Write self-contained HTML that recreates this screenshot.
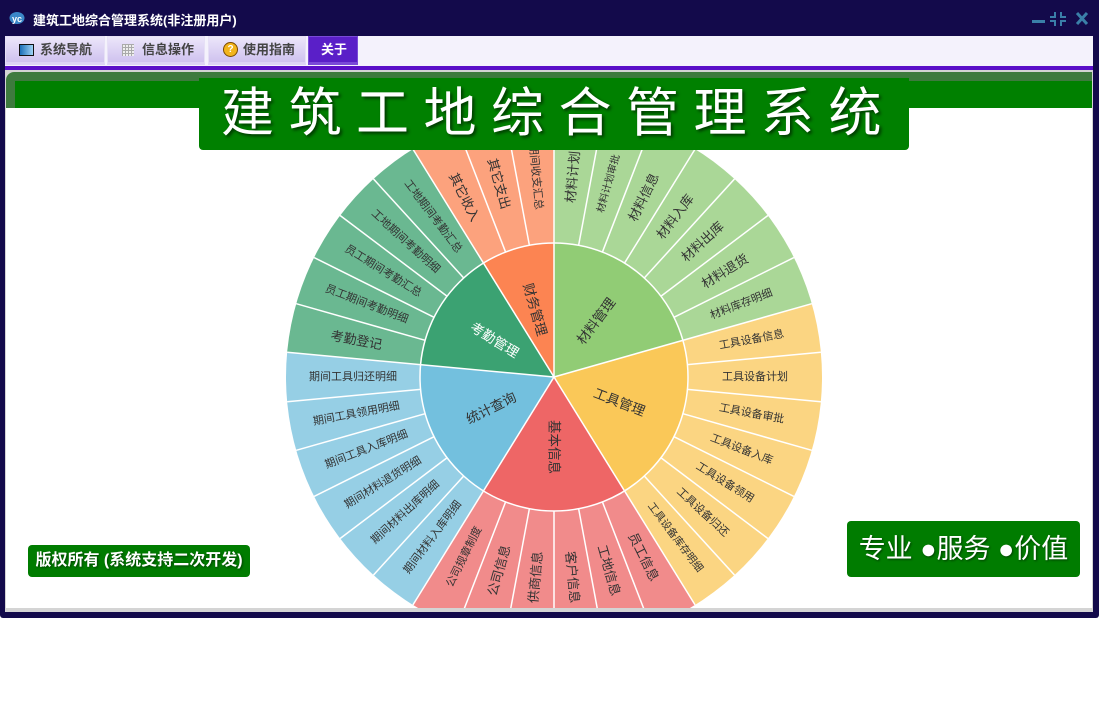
<!DOCTYPE html>
<html><head><meta charset="utf-8">
<style>
*{margin:0;padding:0;box-sizing:border-box}
body{width:1099px;height:723px;background:#fff;position:relative;overflow:hidden;font-family:"Liberation Sans","Noto Sans CJK SC",sans-serif}
.win{position:absolute;left:0;top:0;width:1099px;height:618px;background:#130a4b;border-radius:0 0 3px 3px}
.title{position:absolute;left:33px;top:10px;color:#fff;font-weight:bold;font-size:13px}
.tabbar{position:absolute;left:5px;top:36px;width:1088px;height:30px;background:#f4f2fc}
.tab{position:absolute;top:0;height:29px;background:linear-gradient(#ece6fa,#cfc2ef);border:1px solid #e6e0f6;border-bottom:3px solid #ddd3f5;font-size:13px;font-weight:bold;color:#444;line-height:26px}
.tab.act{background:#5a1fc8;color:#fff;border-color:#7a4ad8}
.pline{position:absolute;left:5px;top:66px;width:1088px;height:4px;background:#5a0fc8}
.content{position:absolute;left:5px;top:70px;width:1088px;height:542px;background:#d4d4d4}
.inner{position:absolute;left:6px;top:72px;width:1086px;height:536px;background:#fff;overflow:hidden;border-radius:8px 0 0 0}
.gtop{position:absolute;left:0;top:0;width:1086px;height:36px;background:#3e7a3e}
.gbar{position:absolute;left:9px;top:9px;width:1077px;height:27px;background:#008000}
.chart{position:absolute;left:0;top:36px;width:1086px;height:500px;overflow:hidden}
.disc{position:absolute;border-radius:50%}
.banner{position:absolute;left:199px;top:78px;width:710px;height:72px;background:#008000;border-radius:0 0 4px 4px;color:#fff;font-family:"Liberation Sans","Noto Sans CJK SC",sans-serif;font-size:53px;letter-spacing:14.5px;line-height:72px;text-indent:22px;text-shadow:2px 2px 3px rgba(0,0,0,.6);white-space:nowrap}
.b1{position:absolute;left:28px;top:545px;width:222px;height:32px;background:#007c00;border-radius:4px;color:#fff;font-weight:bold;font-size:16px;line-height:32px;text-align:center;white-space:nowrap;text-shadow:1px 1px 2px rgba(0,0,0,.5)}
.b2{position:absolute;left:847px;top:521px;width:233px;height:56px;background:#007c00;border-radius:4px;color:#fff;font-size:27px;line-height:56px;text-align:center;white-space:nowrap;text-shadow:1px 1px 2px rgba(0,0,0,.5)}
</style></head><body>
<div class="win"></div>
<svg style="position:absolute;left:9px;top:10px" width="16" height="15"><ellipse cx="8" cy="8" rx="7.5" ry="6" fill="#3b87c8"/><text x="3" y="12" font-size="9" font-weight="bold" fill="#fff" font-family="Liberation Sans">yc</text></svg>
<div class="title">建筑工地综合管理系统(非注册用户)</div>
<svg style="position:absolute;left:1030px;top:11px" width="62" height="16">
<rect x="2" y="9" width="13" height="3" fill="#3a7fa8"/>
<g fill="#3a7fa8"><rect x="24" y="1" width="2" height="5"/><rect x="20" y="5" width="6" height="2"/><rect x="30" y="1" width="2" height="5"/><rect x="30" y="5" width="6" height="2"/><rect x="24" y="9" width="2" height="6"/><rect x="20" y="9" width="6" height="2"/><rect x="30" y="9" width="2" height="6"/><rect x="30" y="9" width="6" height="2"/></g>
<path d="M47 2 L57 13 M57 2 L47 13" stroke="#3a7fa8" stroke-width="3"/>
</svg>
<div class="tabbar">
 <div class="tab" style="left:0;width:100px"><span style="position:absolute;left:13px;top:7px;width:15px;height:12px;border:1px solid #111;background:linear-gradient(90deg,#1a6fb8,#9fd3f5)"></span><span style="position:absolute;left:34px">系统导航</span></div>
 <div class="tab" style="left:102px;width:98px"><span style="position:absolute;left:14px;top:7px;width:12px;height:12px;background:repeating-linear-gradient(90deg,#aaa 0 1px,transparent 1px 3px),repeating-linear-gradient(#aaa 0 1px,#eee 1px 3px)"></span><span style="position:absolute;left:34px">信息操作</span></div>
 <div class="tab" style="left:203px;width:98px"><span style="position:absolute;left:14px;top:5px;width:15px;height:15px;border-radius:50%;background:#f2b41c;border:1px solid #7a4a00;color:#fff;font-size:10px;line-height:13px;text-align:center;font-weight:bold">?</span><span style="position:absolute;left:34px">使用指南</span></div>
 <div class="tab act" style="left:303px;width:50px"><span style="position:absolute;left:12px">关于</span></div>
</div>
<div class="pline"></div>
<div class="content"></div>
<div class="inner">
 <div class="gtop"></div><div class="gbar"></div>
 <div class="chart">
  <div class="disc" style="left:280px;top:1px;width:536px;height:536px;background:conic-gradient(#aad797 0 74.12deg,#fbd582 74.12deg 148.24deg,#f18b8b 148.24deg 211.76deg,#96cfe5 211.76deg 275.29deg,#6ab891 275.29deg 328.24deg,#fca27d 328.24deg 360deg)"></div>
  <div class="disc" style="left:414px;top:135px;width:268px;height:268px;background:conic-gradient(#91cc75 0 74.12deg,#fac858 74.12deg 148.24deg,#ee6666 148.24deg 211.76deg,#73c0de 211.76deg 275.29deg,#3ba272 275.29deg 328.24deg,#fc8452 328.24deg 360deg)"></div>
  <svg style="position:absolute;left:0;top:0" width="1086" height="500">
   <g transform="translate(548,269)" stroke="#fff" stroke-width="1.5">
    <circle r="134" fill="none"/>
    <line y1="0" y2="-268" transform="rotate(0)"/><line y1="0" y2="-268" transform="rotate(74.12)"/><line y1="0" y2="-268" transform="rotate(148.24)"/><line y1="0" y2="-268" transform="rotate(211.76)"/><line y1="0" y2="-268" transform="rotate(275.29)"/><line y1="0" y2="-268" transform="rotate(328.24)"/>
    <line y1="-134" y2="-268" transform="rotate(10.59)"/><line y1="-134" y2="-268" transform="rotate(21.18)"/><line y1="-134" y2="-268" transform="rotate(31.76)"/><line y1="-134" y2="-268" transform="rotate(42.35)"/><line y1="-134" y2="-268" transform="rotate(52.94)"/><line y1="-134" y2="-268" transform="rotate(63.53)"/>
    <line y1="-134" y2="-268" transform="rotate(84.71)"/><line y1="-134" y2="-268" transform="rotate(95.29)"/><line y1="-134" y2="-268" transform="rotate(105.88)"/><line y1="-134" y2="-268" transform="rotate(116.47)"/><line y1="-134" y2="-268" transform="rotate(127.06)"/><line y1="-134" y2="-268" transform="rotate(137.65)"/>
    <line y1="-134" y2="-268" transform="rotate(158.82)"/><line y1="-134" y2="-268" transform="rotate(169.41)"/><line y1="-134" y2="-268" transform="rotate(180)"/><line y1="-134" y2="-268" transform="rotate(190.59)"/><line y1="-134" y2="-268" transform="rotate(201.18)"/>
    <line y1="-134" y2="-268" transform="rotate(222.35)"/><line y1="-134" y2="-268" transform="rotate(232.94)"/><line y1="-134" y2="-268" transform="rotate(243.53)"/><line y1="-134" y2="-268" transform="rotate(254.12)"/><line y1="-134" y2="-268" transform="rotate(264.71)"/>
    <line y1="-134" y2="-268" transform="rotate(285.88)"/><line y1="-134" y2="-268" transform="rotate(296.47)"/><line y1="-134" y2="-268" transform="rotate(307.06)"/><line y1="-134" y2="-268" transform="rotate(317.65)"/>
    <line y1="-134" y2="-268" transform="rotate(338.82)"/><line y1="-134" y2="-268" transform="rotate(349.41)"/>
   </g>
   <g transform="translate(548,269)" fill="#333" font-family="Liberation Sans,Noto Sans CJK SC,sans-serif" text-anchor="middle" dominant-baseline="central" font-size="13">
    <g transform="rotate(-84.71) translate(201,0)"><text>材料计划</text></g>
    <g transform="rotate(-74.12) translate(201,0)" font-size="10"><text>材料计划审批</text></g>
    <g transform="rotate(-63.53) translate(201,0)"><text>材料信息</text></g>
    <g transform="rotate(-52.94) translate(201,0)"><text>材料入库</text></g>
    <g transform="rotate(-42.35) translate(201,0)"><text>材料出库</text></g>
    <g transform="rotate(-31.76) translate(201,0)"><text>材料退货</text></g>
    <g transform="rotate(-21.18) translate(201,0)" font-size="11"><text>材料库存明细</text></g>
    <g transform="rotate(-10.59) translate(201,0)" font-size="11"><text>工具设备信息</text></g>
    <g transform="rotate(0) translate(201,0)" font-size="11"><text>工具设备计划</text></g>
    <g transform="rotate(10.59) translate(201,0)" font-size="11"><text>工具设备审批</text></g>
    <g transform="rotate(21.18) translate(201,0)" font-size="11"><text>工具设备入库</text></g>
    <g transform="rotate(31.76) translate(201,0)" font-size="11"><text>工具设备领用</text></g>
    <g transform="rotate(42.35) translate(201,0)" font-size="11"><text>工具设备归还</text></g>
    <g transform="rotate(52.94) translate(201,0)" font-size="10.5"><text>工具设备库存明细</text></g>
    <g transform="rotate(63.53) translate(201,0)"><text>员工信息</text></g>
    <g transform="rotate(74.12) translate(201,0)"><text>工地信息</text></g>
    <g transform="rotate(84.71) translate(201,0)"><text>客户信息</text></g>
    <g transform="rotate(275.29) translate(-201,0)"><text>供商信息</text></g>
    <g transform="rotate(285.88) translate(-201,0)"><text>公司信息</text></g>
    <g transform="rotate(296.47) translate(-201,0)" font-size="11"><text>公司规章制度</text></g>
    <g transform="rotate(307.06) translate(-201,0)" font-size="11"><text>期间材料入库明细</text></g>
    <g transform="rotate(317.65) translate(-201,0)" font-size="11"><text>期间材料出库明细</text></g>
    <g transform="rotate(328.24) translate(-201,0)" font-size="11"><text>期间材料退货明细</text></g>
    <g transform="rotate(338.82) translate(-201,0)" font-size="11"><text>期间工具入库明细</text></g>
    <g transform="rotate(349.41) translate(-201,0)" font-size="11"><text>期间工具领用明细</text></g>
    <g transform="rotate(360) translate(-201,0)" font-size="11"><text>期间工具归还明细</text></g>
    <g transform="rotate(370.59) translate(-201,0)"><text>考勤登记</text></g>
    <g transform="rotate(381.18) translate(-201,0)" font-size="11"><text>员工期间考勤明细</text></g>
    <g transform="rotate(391.76) translate(-201,0)" font-size="11"><text>员工期间考勤汇总</text></g>
    <g transform="rotate(402.35) translate(-201,0)" font-size="11"><text>工地期间考勤明细</text></g>
    <g transform="rotate(412.94) translate(-201,0)" font-size="11"><text>工地期间考勤汇总</text></g>
    <g transform="rotate(423.53) translate(-201,0)"><text>其它收入</text></g>
    <g transform="rotate(434.12) translate(-201,0)"><text>其它支出</text></g>
    <g transform="rotate(444.71) translate(-201,0)" font-size="11"><text>期间收支汇总</text></g>
    <g font-size="13.5">
     <g transform="rotate(-52.94) translate(70,0)"><text>材料管理</text></g>
     <g transform="rotate(21.18) translate(70,0)"><text>工具管理</text></g>
     <g transform="rotate(90) translate(70,0)"><text>基本信息</text></g>
     <g transform="rotate(333.53) translate(-70,0)"><text>统计查询</text></g>
     <g transform="rotate(391.76) translate(-70,0)" fill="#fff"><text>考勤管理</text></g>
     <g transform="rotate(434.12) translate(-70,0)"><text>财务管理</text></g>
    </g>
   </g>
  </svg>
 </div>
</div>
<div class="banner">建筑工地综合管理系统</div>
<div class="b1">版权所有 (系统支持二次开发)</div>
<div class="b2">专业 ●服务 ●价值</div>
</body></html>
